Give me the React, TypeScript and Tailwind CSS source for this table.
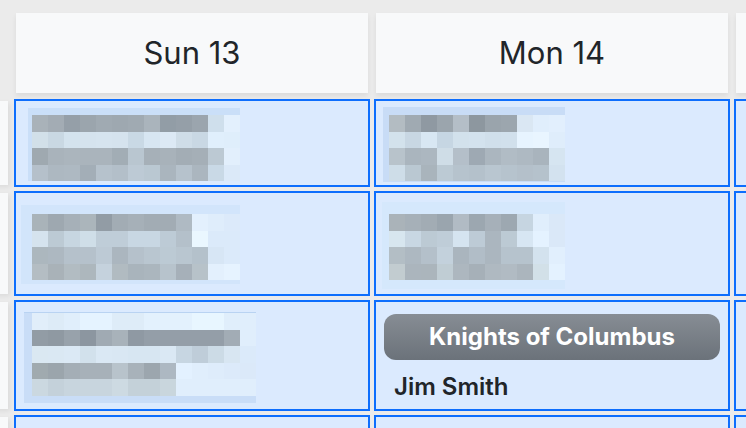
import type { ReactNode } from 'react'

type Mosaic = {
  className: string
  rows: string[][]
}

// pixelated (redacted) names in the calendar cells
const sunFirst: Mosaic = {
  className: 'ml-[12px] mt-[7px] pt-[7px] pl-[4px] pb-0 bg-[#cadff8]',
  rows: [
    ['#a9b2b9', '#a3acb4', '#959fa8', '#9ba5ad', '#a0aab2', '#9ea8b0', '#a0aab2', '#aab4bc', '#929da6', '#959fa8', '#9ba5ae', '#cfdfec', '#e3f0fd'],
    ['#d2e0e9', '#c9d8e3', '#d4e3ee', '#d5e3ee', '#d6e4ef', '#d5e3ee', '#c9d9e5', '#d7e6f2', '#dce9f5', '#cfdde8', '#c9d8e4', '#e0effc', '#dfeefb'],
    ['#9fa9b0', '#a9b3bb', '#abb5bd', '#aab4bc', '#aab4bc', '#a2adb5', '#b9c6d0', '#a6b0b8', '#a8b2ba', '#a3adb5', '#a5afb7', '#bcc9d3', '#e2effc'],
    ['#b5c0ca', '#adb8c1', '#aeb9c2', '#a3aeb7', '#b6c2cc', '#b3bfc9', '#bdcad5', '#bac8d2', '#aab5be', '#b6c2cc', '#abb6bf', '#c9d9e6', '#dbe9f8'],
  ],
}

const monFirst: Mosaic = {
  className: 'ml-[7px] mt-[6px] pt-[8px] pl-[6px] pb-[1px] bg-[#c8dcf6]',
  rows: [
    ['#b3bcc2', '#a0aab2', '#8f99a2', '#9ba5ad', '#b4bec7', '#8d979f', '#9aa4ac', '#9ca6ae', '#dae7f3', '#e0eefc', '#e2effd'],
    ['#d3e2ec', '#c8d7e3', '#d8e7f3', '#c6d6e3', '#d2e1ec', '#d3e2ee', '#d0dfeb', '#d1e0ec', '#e7f4ff', '#e9f5ff', '#dfedfb'],
    ['#b8c3cb', '#aab5be', '#acb7c0', '#cfdde7', '#b4bfc9', '#9ea9b3', '#abb6bf', '#b1bcc5', '#aeb9c2', '#a9b4bd', '#d6e5f1'],
    ['#cedde8', '#bac8d2', '#a9b4bc', '#bccad4', '#b6c3cd', '#b4c1cb', '#b9c6d0', '#b6c3cd', '#b4c0ca', '#b5c2cc', '#d3e2ef'],
  ],
}

const sunSecond: Mosaic = {
  className: 'ml-[5px] mt-[12px] pt-[9px] pl-[11px] pb-[4px] bg-[#d2e5fb]',
  rows: [
    ['#a9b3b9', '#9ea8b0', '#a6b0b8', '#abb5bb', '#929ca5', '#a2acb4', '#a6b0b8', '#a2acb4', '#a2acb4', '#afbac3', '#e3f0fd', '#dfedfb', '#dceafa'],
    ['#d5e3ee', '#bccad4', '#c7d6e1', '#cfdee8', '#bfcdd8', '#bfcdd8', '#c8d7e3', '#c8d7e3', '#bdcbd6', '#b4c0ca', '#eaf7ff', '#dbeafa', '#dbeafa'],
    ['#acb7be', '#adb8c1', '#b5c1cb', '#b5c1cb', '#bdcad5', '#abb6bf', '#b5c1cb', '#b9c6d0', '#bccad4', '#b9c6d0', '#b4c1cb', '#d7e6f5', '#dbeafa'],
    ['#b4bdc3', '#a9b2b8', '#b2bcc2', '#adb7bd', '#c5d2dd', '#b1bbc1', '#a9b4bc', '#abb6be', '#b7c3cc', '#a6b0b9', '#b7c2c9', '#e3f0fd', '#e6f3ff'],
  ],
}

const monSecond: Mosaic = {
  className: 'ml-[6px] mt-[9px] pt-[12px] pl-[7px] pb-[9px] bg-[#d5e8fc]',
  rows: [
    ['#aab3b9', '#a6b0b8', '#a2acb4', '#9aa5ae', '#b1bbc4', '#9ca7b0', '#a6b0b9', '#9da8b1', '#c6d5e1', '#e0eefc', '#dae8f8'],
    ['#d7e6ef', '#c8d7e3', '#bccad4', '#bfcdd8', '#d5e4f0', '#bdcbd6', '#abb6bf', '#bccad4', '#d7e6f3', '#e4f2ff', '#dae8f8'],
    ['#b3bec5', '#adb8c1', '#b4c0ca', '#c3d1dc', '#aab5be', '#b1bdc7', '#abb6bf', '#b6c3cd', '#b6c3cd', '#d3e2ee', '#e1effd'],
    ['#c2ccd0', '#abb5bd', '#abb5bc', '#c0cdd4', '#adb7bf', '#a6b0b8', '#afb9c1', '#b1bbc3', '#abb5bd', '#d2e0e8', '#e4f2ff'],
  ],
}

const sunThird: Mosaic = {
  className: 'ml-[8px] mt-[10px] pt-0 pl-[8px] pb-[7px] bg-[#c9ddf7] border-t border-[#b9d3f2]',
  rows: [
    ['#e1eefa', '#ddebf7', '#e0eefb', '#e5f3ff', '#e5f3ff', '#deecf8', '#deecf8', '#e3f1fd', '#e3f1fd', '#e3f1fd', '#e8f6ff', '#e8f6ff', '#e0eefb', '#e0eefc'],
    ['#929ca5', '#8f99a2', '#98a2ab', '#8c96a0', '#a0aab3', '#a8b2ba', '#8f99a3', '#949ea8', '#949ea8', '#949ea8', '#949ea8', '#949ea8', '#a2acb5', '#e0eefc'],
    ['#dae8f2', '#dae8f3', '#dbe9f5', '#d2e1ec', '#dae8f4', '#d9e7f3', '#d7e6f2', '#d7e6f2', '#dae8f4', '#c7d6e2', '#bfcdd9', '#ccdbe6', '#d8e6f2', '#dbeafa'],
    ['#a0aaaf', '#9ba5ac', '#a4aeb6', '#a7b1b9', '#a7b1b9', '#b8c3cb', '#a8b2ba', '#9ca6ae', '#adb8c2', '#e3f1ff', '#e0eefc', '#deecfb', '#dceafa', '#dbe9f9'],
    ['#cbd8e0', '#c4d1da', '#c8d5de', '#c8d5de', '#c8d5de', '#cddae2', '#c4d1d9', '#c4d1d9', '#c9d6dd', '#e0eefc', '#e0eefc', '#e0eefc', '#e0eefc', '#e0eefc'],
  ],
}

function Blur({ mosaic }: { mosaic: Mosaic }) {
  return (
    <div className={`self-start flex flex-col ${mosaic.className}`}>
      {mosaic.rows.map((row, i) => (
        <div key={i} className="flex">
          {row.map((c, j) => (
            <div key={j} className="w-[16px] h-[16.5px]" style={{ backgroundColor: c }} />
          ))}
        </div>
      ))}
    </div>
  )
}

function Head({ children }: { children?: ReactNode }) {
  return (
    <div className="m-0.5 flex items-center justify-center bg-[#f8f9fa] text-[31px] text-[#212529] shadow-[0_3px_5px_rgba(0,0,0,0.07)]">
      {children}
    </div>
  )
}

function Side() {
  return <div className="m-0.5 bg-[#f8f9fa] shadow-[2px_2px_5px_rgba(0,0,0,0.07)]" />
}

function Cell({ children }: { children?: ReactNode }) {
  return <div className="flex flex-col border-2 border-[#0d6efd] bg-[#dbeafe] overflow-hidden">{children}</div>
}

export default function App() {
  return (
    <div className="w-[746px] h-[428px] overflow-hidden bg-[#ebebeb] font-['Inter',sans-serif]">
      <div className="-ml-[90px] pt-[11px] grid grid-cols-[100px_356px_356px_356px] grid-rows-[84px_88px_105px_111px_100px] gap-1">
        <div />
        <Head>Sun 13</Head>
        <Head>Mon 14</Head>
        <Head />

        <Side />
        <Cell>
          <Blur mosaic={sunFirst} />
        </Cell>
        <Cell>
          <Blur mosaic={monFirst} />
        </Cell>
        <Cell />

        <Side />
        <Cell>
          <Blur mosaic={sunSecond} />
        </Cell>
        <Cell>
          <Blur mosaic={monSecond} />
        </Cell>
        <Cell />

        <Side />
        <Cell>
          <Blur mosaic={sunThird} />
        </Cell>
        <Cell>
          <div className="mx-2 mt-3 h-[46px] rounded-xl bg-gradient-to-b from-[#878d94] to-[#6b727a] flex items-center justify-center text-[24px] font-bold text-white">
            Knights of Columbus
          </div>
          <div className="ml-[18px] mt-[9px] text-[24px] font-semibold text-[#212529]">Jim Smith</div>
        </Cell>
        <Cell />

        <Side />
        <Cell />
        <Cell />
        <Cell />
      </div>
    </div>
  )
}
